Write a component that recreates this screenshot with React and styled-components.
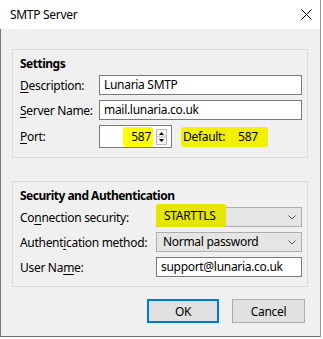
import React from "react";
import styled, { createGlobalStyle } from "styled-components";

const Global = createGlobalStyle`
  html, body { margin: 0; padding: 0; background: #ffffff; }
  body { font-family: "Noto Sans", "Open Sans", sans-serif; font-size: 12px; color: #000; letter-spacing: -0.3px; }
`;

const Window = styled.div`
  width: 321px;
  height: 337px;
  box-sizing: border-box;
  display: flex;
  flex-direction: column;
  border-left: 1px solid #7a7a7a;
  border-right: 1px solid #9a9a9a;
  border-bottom: 1px solid #6f6f6f;
  background: #f0f0f0;
`;

const TitleBar = styled.div`
  height: 29px;
  flex: none;
  display: flex;
  align-items: center;
  justify-content: space-between;
  background: #ffffff;
  padding: 0 8px 0 10px;
  margin-left: -1px;
`;

const Title = styled.span`
  font-size: 12px;
`;

const CloseIcon = styled.svg`
  display: block;
  width: 11px;
  height: 11px;
`;

const Body = styled.div`
  flex: 1;
  display: flex;
  flex-direction: column;
  padding: 20px 12px 0 11px;
`;

const Group = styled.section`
  border: 1px solid #dcdcdc;
  padding: 6px 5px 9px 7px;
  margin-bottom: ${(p) => p.$after}px;
`;

const Legend = styled.div`
  font-weight: 700;
  line-height: 16px;
  height: 16px;
  margin-bottom: 3px;
  letter-spacing: -0.5px;
`;

const Fields = styled.div`
  display: grid;
  grid-template-columns: ${(p) => p.$labelWidth}px 1fr;
  row-gap: 5px;
  align-items: center;
`;

const Label = styled.span`
  white-space: nowrap;
`;

const Key = styled.span`
  text-decoration: underline;
  text-underline-offset: 2px;
`;

const TextBox = styled.div`
  height: 20px;
  box-sizing: border-box;
  border: 1px solid #7a7a7a;
  background: #ffffff;
  padding: 0 4px;
  line-height: 18px;
  white-space: nowrap;
`;

const Select = styled.div`
  position: relative;
  height: 20px;
  box-sizing: border-box;
  border: 1px solid #adadad;
  background: #e5e5e5;
  padding: 0 20px 0 6px;
  line-height: 18px;
  display: flex;
  align-items: center;
`;

const Chevron = styled.svg`
  position: absolute;
  right: 5px;
  top: 7px;
  width: 8px;
  height: 5px;
`;

const PortRow = styled.div`
  display: flex;
  align-items: center;
  gap: 9px;
`;

const PortBox = styled.div`
  width: 73px;
  height: 23px;
  box-sizing: border-box;
  border: 1px solid #7a7a7a;
  background: #ffffff;
  display: flex;
  align-items: center;
  justify-content: flex-end;
  padding-right: 4px;
`;

const Spinner = styled.svg`
  display: block;
  width: 11px;
  height: 16px;
  margin-left: 3px;
`;

const Mark = styled.span`
  display: inline-flex;
  align-items: center;
  height: ${(p) => p.$h || 20}px;
  padding: ${(p) => p.$pad};
  margin: ${(p) => p.$m || 0};
  background: ${(p) => p.$bg};
  border-radius: 3px;
`;

const Gap = styled.span`
  display: inline-block;
  width: ${(p) => p.$w}px;
`;

const Buttons = styled.div`
  display: flex;
  justify-content: flex-end;
  gap: 13px;
  padding-right: 3px;
`;

const Button = styled.button`
  width: ${(p) => p.$w}px;
  height: 24px;
  box-sizing: border-box;
  font: inherit;
  font-size: 12px;
  letter-spacing: -0.3px;
  color: #000;
  background: #e1e1e1;
  border: ${(p) => (p.$default ? "2px solid #0078d7" : "1px solid #adadad")};
  padding: 0;
`;

const ChevronDown = () => (
  <Chevron viewBox="0 0 8 5">
    <path d="M0.5 0.5 L4 4 L7.5 0.5" fill="none" stroke="#555" strokeWidth="1" />
  </Chevron>
);

export default function App() {
  return (
    <>
      <Global />
      <Window>
        <TitleBar>
          <Title>SMTP Server</Title>
          <CloseIcon viewBox="0 0 11 11">
            <path d="M0.5 0.5 L10.5 10.5 M10.5 0.5 L0.5 10.5" stroke="#000" strokeWidth="1" />
          </CloseIcon>
        </TitleBar>
        <Body>
          <Group $after={23}>
            <Legend>Settings</Legend>
            <Fields $labelWidth={79}>
              <Label><Key>D</Key>escription:</Label>
              <TextBox>Lunaria SMTP</TextBox>
              <Label><Key>S</Key>erver Name:</Label>
              <TextBox>mail.lunaria.co.uk</TextBox>
              <Label><Key>P</Key>ort:</Label>
              <PortRow>
                <PortBox>
                  <Mark $bg="#ffff00" $pad="0 2px 0 8px">587</Mark>
                  <Spinner viewBox="0 0 11 16">
                    <rect x="0.5" y="0.5" width="10" height="15" fill="#f4f4f4" stroke="#b9b9b9" />
                    <line x1="1" y1="8" x2="10" y2="8" stroke="#b9b9b9" />
                    <path d="M3 6 L5.5 3 L8 6 Z" fill="#000" />
                    <path d="M3 10 L5.5 13 L8 10 Z" fill="#000" />
                  </Spinner>
                </PortBox>
                <Mark $bg="#f0f000" $pad="0 10px 0 2px">
                  Default:<Gap $w={13} />587
                </Mark>
              </PortRow>
            </Fields>
          </Group>
          <Group $after={12}>
            <Legend>Security and Authentication</Legend>
            <Fields $labelWidth={136}>
              <Label>Co<Key>n</Key>nection security:</Label>
              <Select>
                <Mark $bg="#e5e500" $h={23} $pad="0 10px 0 8px" $m="-3px 0 0 -7px">STARTTLS</Mark>
                <ChevronDown />
              </Select>
              <Label>Authent<Key>i</Key>cation method:</Label>
              <Select>
                Normal password
                <ChevronDown />
              </Select>
              <Label>User Na<Key>m</Key>e:</Label>
              <TextBox>support@lunaria.co.uk</TextBox>
            </Fields>
          </Group>
          <Buttons>
            <Button $default $w={72}>OK</Button>
            <Button $w={73}>Cancel</Button>
          </Buttons>
        </Body>
      </Window>
    </>
  );
}
